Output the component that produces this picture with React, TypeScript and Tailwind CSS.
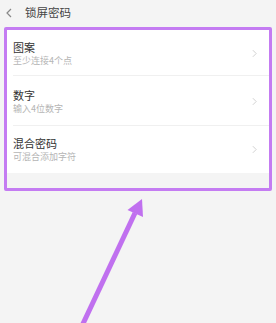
const rows = [
  { title: "图案", sub: "至少连接4个点", h: "h-[46px]" },
  { title: "数字", sub: "输入4位数字", h: "h-[50px]" },
  { title: "混合密码", sub: "可混合添加字符", h: "h-[47px]" },
];

function Chevron({ className }: { className?: string }) {
  return (
    <svg className={className} viewBox="0 0 6 10" fill="none" stroke="currentColor" strokeWidth={1}>
      <path d="M1 1l4 4-4 4" />
    </svg>
  );
}

export default function App() {
  return (
    <div
      className="relative w-[276px] h-[323px] overflow-hidden bg-[#f4f4f4]"
      style={{ fontFamily: '"Noto Sans CJK SC", "Noto Sans", sans-serif' }}
    >
      {/* header */}
      <div className="flex items-center h-[25px] pl-[6px]">
        <svg className="w-[6px] h-[10px] text-[#888]" viewBox="0 0 6 10" fill="none" stroke="currentColor" strokeWidth={1.2}>
          <path d="M5 1L1 5l4 4" />
        </svg>
        <span className="ml-[13px] text-[11.5px] leading-none text-[#444]">锁屏密码</span>
      </div>

      {/* highlighted list */}
      <div className="mt-[2px] ml-[4px] w-[268px] border-[3px] border-[#c47cf2] rounded-[2px]">
        <div className="bg-white">
          {rows.map((r, i) => (
            <div key={r.title} className={`relative flex items-center ${r.h} pl-[6px] pr-[12px]`}>
              <div className="flex-1 flex flex-col">
                <span className="text-[11px] leading-[14px] text-[#333]">{r.title}</span>
                <span className="text-[9px] leading-[12px] mt-[1px] text-[#b5b5b5]">{r.sub}</span>
              </div>
              <Chevron className="w-[5px] h-[9px] text-[#c8c8c8]" />
              {i < rows.length - 1 && (
                <div className="absolute bottom-0 left-[6px] right-0 h-px bg-[#f0f0f0]" />
              )}
            </div>
          ))}
        </div>
        <div className="h-[15px] bg-[#f4f4f4]" />
      </div>

      {/* arrow */}
      <svg className="absolute inset-0 w-[276px] h-[323px] pointer-events-none" viewBox="0 0 276 323">
        <line x1="81" y1="328" x2="135" y2="213" stroke="#c070ef" strokeWidth={5} />
        <polygon points="142,199 143,217 127.5,210" fill="#c070ef" />
      </svg>
    </div>
  );
}
